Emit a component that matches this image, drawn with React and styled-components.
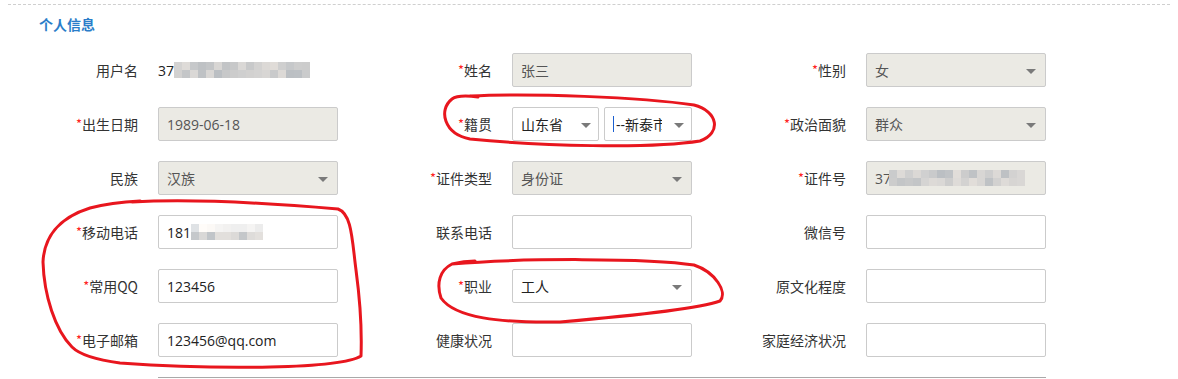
import React from "react";
import styled, { createGlobalStyle } from "styled-components";

const GlobalStyle = createGlobalStyle`
  html, body {
    margin: 0;
    padding: 0;
    background: #fff;
  }
  body {
    font-family: "Open Sans", "Noto Sans CJK SC", sans-serif;
    font-size: 14px;
    color: #333;
  }
`;

const Page = styled.div`
  position: relative;
  width: 1178px;
  height: 379px;
  padding: 4px 8px 0;
  box-sizing: border-box;
  overflow: hidden;
`;

const Dashed = styled.div`
  border-top: 1px dashed #cfcfcf;
`;

const Title = styled.div`
  margin: 9px 0 0 31px;
  height: 20px;
  line-height: 20px;
  font-size: 14px;
  font-weight: bold;
  color: #2a7dc9;
  font-family: "Noto Sans CJK SC", sans-serif;
`;

const Grid = styled.div`
  margin: 19px 0 0 10px;
  display: grid;
  grid-template-columns: repeat(3, 354px);
  row-gap: 20px;
`;

const Field = styled.div`
  display: flex;
  align-items: center;
  height: 34px;
`;

const Label = styled.label`
  width: 140px;
  padding-right: 20px;
  box-sizing: border-box;
  text-align: right;
  font-family: "Noto Sans CJK SC", sans-serif;
  font-size: 14px;
  color: #333;
  white-space: nowrap;
`;

const Star = styled.span`
  color: #f22;
  font-size: 13px;
  position: relative;
  top: -1px;
`;

const Box = styled.div`
  position: relative;
  width: ${(p) => p.$w || 180}px;
  height: 34px;
  box-sizing: border-box;
  border: 1px solid #cbcbcb;
  border-radius: 2px;
  background: ${(p) => (p.$disabled ? "#ebeae4" : "#fff")};
  color: ${(p) => (p.$disabled ? "#555" : "#222")};
  padding: 0 ${(p) => p.$pr || 8}px 0 8px;
  display: flex;
  align-items: center;
  overflow: hidden;
  white-space: nowrap;
  font-size: 14px;
`;

const Clip = styled.span`
  overflow: hidden;
  white-space: nowrap;
  display: flex;
  align-items: center;
`;

const Arrow = styled.span`
  position: absolute;
  right: ${(p) => p.$r || 9}px;
  top: 15px;
  width: 0;
  height: 0;
  border-left: 5px solid transparent;
  border-right: 5px solid transparent;
  border-top: 5px solid #7a7a7a;
`;

const Pair = styled.div`
  display: flex;
  gap: 5px;
`;

const Caret = styled.span`
  display: inline-block;
  flex: none;
  width: 1px;
  height: 16px;
  background: #1a5fd0;
  margin-right: 2px;
`;

const Plain = styled.span`
  font-family: "Open Sans", "Noto Sans CJK SC", sans-serif;
  color: #222;
`;

const MosaicWrap = styled.span`
  display: inline-grid;
  grid-template-columns: repeat(${(p) => p.$cols}, 8px);
  grid-auto-rows: 8px;
  margin-left: ${(p) => p.$ml || 0}px;
`;

const Cell = styled.span`
  display: block;
`;

const Divider = styled.div`
  margin: 20px 0 0 150px;
  width: 888px;
  border-top: 1px solid #a9a9a9;
`;

const Marks = styled.svg`
  position: absolute;
  left: 0;
  top: 0;
  pointer-events: none;
`;

function Mosaic({ cols, rows, seed, light, ml }) {
  const cells = [];
  let s = seed;
  for (let i = 0; i < cols * rows; i++) {
    s = (s * 9301 + 49297) % 233280;
    const r = s / 233280;
    const row = Math.floor(i / cols);
    const base = light ? (row === 0 ? 222 : 196) : 190;
    const v = Math.round(base + r * 32);
    const tint = Math.round((r - 0.5) * 8);
    cells.push(
      <Cell
        key={i}
        style={{ background: `rgb(${v + tint},${v},${v - tint})` }}
      />
    );
  }
  return (
    <MosaicWrap $cols={cols} $ml={ml}>
      {cells}
    </MosaicWrap>
  );
}

function Req({ children }) {
  return (
    <Label>
      <Star>*</Star>
      {children}
    </Label>
  );
}

function Input({ disabled, children }) {
  return <Box $disabled={disabled}>{children}</Box>;
}

function Select({ disabled, children, w, r, pr }) {
  return (
    <Box $disabled={disabled} $pr={pr || 24} $w={w}>
      <Clip>{children}</Clip>
      <Arrow $r={r} />
    </Box>
  );
}

export default function App() {
  return (
    <>
      <GlobalStyle />
      <Page>
        <Dashed />
        <Title>个人信息</Title>
        <Grid>
          <Field>
            <Label>用户名</Label>
            <Plain>37</Plain>
            <Mosaic cols={17} rows={2} seed={11} />
          </Field>
          <Field>
            <Req>姓名</Req>
            <Input disabled>张三</Input>
          </Field>
          <Field>
            <Req>性别</Req>
            <Select disabled>女</Select>
          </Field>

          <Field>
            <Req>出生日期</Req>
            <Input disabled>1989-06-18</Input>
          </Field>
          <Field>
            <Req>籍贯</Req>
            <Pair>
              <Select w={87} r={7}>山东省</Select>
              <Select w={88} r={7} pr={29}>
                <Caret />
                --新泰市
              </Select>
            </Pair>
          </Field>
          <Field>
            <Req>政治面貌</Req>
            <Select disabled>群众</Select>
          </Field>

          <Field>
            <Label>民族</Label>
            <Select disabled>汉族</Select>
          </Field>
          <Field>
            <Req>证件类型</Req>
            <Select disabled>身份证</Select>
          </Field>
          <Field>
            <Req>证件号</Req>
            <Input disabled>
              37
              <Mosaic cols={17} rows={2} seed={5} ml={-2} />
            </Input>
          </Field>

          <Field>
            <Req>移动电话</Req>
            <Input>
              181
              <Mosaic cols={9} rows={2} seed={23} light />
            </Input>
          </Field>
          <Field>
            <Label>联系电话</Label>
            <Input />
          </Field>
          <Field>
            <Label>微信号</Label>
            <Input />
          </Field>

          <Field>
            <Req>常用QQ</Req>
            <Input>123456</Input>
          </Field>
          <Field>
            <Req>职业</Req>
            <Select>工人</Select>
          </Field>
          <Field>
            <Label>原文化程度</Label>
            <Input />
          </Field>

          <Field>
            <Req>电子邮箱</Req>
            <Input>123456@qq.com</Input>
          </Field>
          <Field>
            <Label>健康状况</Label>
            <Input />
          </Field>
          <Field>
            <Label>家庭经济状况</Label>
            <Input />
          </Field>
        </Grid>
        <Divider />
        <Marks width="1178" height="379" viewBox="0 0 1178 379">
          <g
            fill="none"
            stroke="#e8161e"
            strokeWidth="3"
            strokeLinecap="round"
            strokeLinejoin="round"
          >
            <path d="M 470 96 C 530 93, 640 97, 694 105 C 718 111, 722 133, 700 141 C 650 149, 540 146, 470 139 C 444 134, 438 110, 452 99 C 456 96, 462 95, 478 97" />
            <path d="M 132 202 C 200 198, 280 204, 338 209 C 352 214, 352 240, 356 270 C 360 300, 362 330, 361 356 C 340 369, 220 370, 120 363 C 90 359, 78 353, 72 347 C 55 330, 44 295, 43 262 C 44 238, 58 218, 90 208 C 105 204, 120 202, 140 201" />
            <path d="M 452 264 C 520 258, 650 258, 694 265 C 715 272, 728 292, 720 301 C 700 308, 630 316, 560 322 C 500 323, 455 318, 441 298 C 436 283, 440 270, 452 264 C 460 262, 468 261, 475 261" />
          </g>
        </Marks>
      </Page>
    </>
  );
}
